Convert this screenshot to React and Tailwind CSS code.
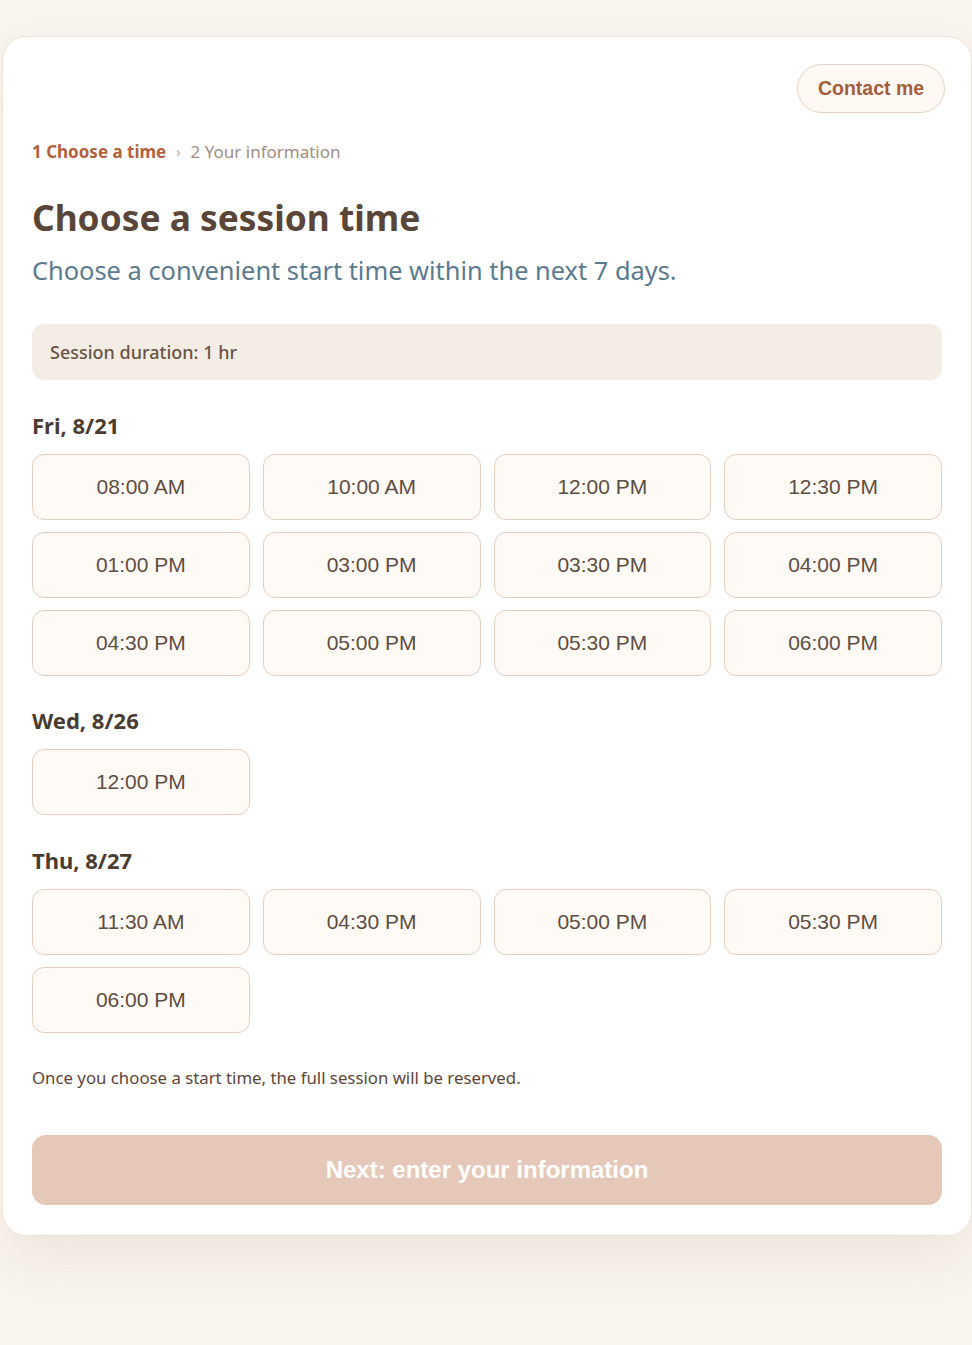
import React from "react";

const days = [
  { label: "Fri, 8/21", mt: "mt-[31px]", times: ["08:00 AM", "10:00 AM", "12:00 PM", "12:30 PM", "01:00 PM", "03:00 PM", "03:30 PM", "04:00 PM", "04:30 PM", "05:00 PM", "05:30 PM", "06:00 PM"] },
  { label: "Wed, 8/26", mt: "mt-[30px]", times: ["12:00 PM"] },
  { label: "Thu, 8/27", mt: "mt-[31px]", times: ["11:30 AM", "04:30 PM", "05:00 PM", "05:30 PM", "06:00 PM"] },
];

const sans = { fontFamily: '"Noto Sans", "Open Sans", sans-serif' };

export default function App() {
  return (
    <div className="min-h-[1345px] bg-[#f9f5ef] pt-[36px] pb-[110px]" style={sans}>
      <div className="ml-[2px] w-[970px] rounded-[24px] border border-[#eee2d6] bg-white px-[29px] pt-[27px] pb-[30px] shadow-[0_24px_60px_rgba(140,100,60,0.10)]">
        <div className="mr-[-3px] flex justify-end">
          <button className="h-[49px] w-[148px] rounded-full border border-[#e6d2c3] bg-[#fff8f3] text-[19.5px] font-bold text-[#a35f3d] [font-family:'Liberation_Sans',Arial,sans-serif]">
            Contact me
          </button>
        </div>
        <div className="mt-[27px] flex items-center text-[17px] leading-[24px]">
          <span className="font-bold text-[#b0623c]">1 Choose a time</span>
          <span className="mx-[10px] text-[14px] text-[#b8a89c]">›</span>
          <span className="text-[#a08e84]">2 Your information</span>
        </div>
        <h1 className="mt-[30px] text-[35.3px] font-bold leading-[46px] text-[#594638]">Choose a session time</h1>
        <p className="mt-[13px] text-[25.4px] leading-[34px] text-[#5c7a8d]">Choose a convenient start time within the next 7 days.</p>
        <div className="mt-[37px] flex h-[56px] items-center rounded-[12px] bg-[#f3ede6] px-[18px] text-[18px] font-medium text-[#6b5444]">
          Session duration: 1 hr
        </div>
        {days.map((d) => (
          <div key={d.label} className={d.mt}>
            <h2 className="text-[22px] font-bold leading-[28px] text-[#4b3c31]">{d.label}</h2>
            <div className="mt-[15px] grid grid-cols-4 gap-x-[13px] gap-y-[12px]">
              {d.times.map((t) => (
                <button
                  key={t}
                  className="h-[66px] rounded-[12px] border border-[#e3cfc0] bg-[#fffaf6] text-[21px] text-[#5e4d42] [font-family:'Liberation_Sans',Arial,sans-serif]"
                >
                  {t}
                </button>
              ))}
            </div>
          </div>
        ))}
        <p className="mt-[33px] text-[16.8px] leading-[24px] text-[#5a4638]">Once you choose a start time, the full session will be reserved.</p>
        <button className="mt-[45px] h-[70px] w-full rounded-[14px] bg-[#e6c8b8] text-[24px] font-bold text-white [font-family:'Liberation_Sans',Arial,sans-serif]">
          Next: enter your information
        </button>
      </div>
    </div>
  );
}
